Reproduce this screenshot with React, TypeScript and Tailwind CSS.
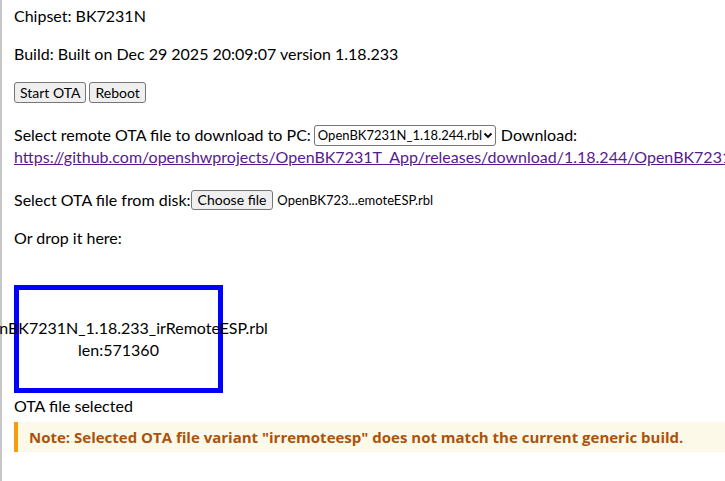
export default function App() {
  return (
    <div className="h-[481px] w-[725px] overflow-hidden bg-white">
      <div
        className="flex h-full flex-col border-l-2 border-[#c6c6c6] pl-3 text-[16px] leading-[22px] text-black"
        style={{ fontFamily: "Lato, 'Liberation Sans', sans-serif" }}
      >
        <p className="mt-[5px]">Chipset: BK7231N</p>
        <p className="mt-4">Build: Built on Dec 29 2025 20:09:07 version 1.18.233</p>

        <div className="mt-[17px] flex gap-[3px]">
          <button className="h-[21px] rounded-[3px] border border-[#767676] bg-[#efefef] px-[5px] text-[14px] leading-[19px]">
            Start OTA
          </button>
          <button className="h-[21px] rounded-[3px] border border-[#767676] bg-[#efefef] px-[5px] text-[14px] leading-[19px]">
            Reboot
          </button>
        </div>

        <div className="mt-[21px] flex items-center whitespace-nowrap">
          <span>Select remote OTA file to download to PC:</span>
          <span className="ml-[3px] flex h-[21px] w-[182px] items-center justify-between rounded-[3px] border border-[#767676] bg-white pl-[3px] pr-[2px] text-[13px]">
            OpenBK7231N_1.18.244.rbl
            <svg width="10" height="10" viewBox="0 0 10 10">
              <path d="M1.5 3.5 L5 7 L8.5 3.5" fill="none" stroke="#000" strokeWidth="1.8" />
            </svg>
          </span>
          <span className="ml-[5px]">Download:</span>
        </div>
        <a href="#" className="whitespace-nowrap text-[#551a8b] underline">
          https://github.com/openshwprojects/OpenBK7231T_App/releases/download/1.18.244/OpenBK7231N_1.18.244.rbl
        </a>

        <div className="mt-[21px] flex items-center whitespace-nowrap">
          <span>Select OTA file from disk:</span>
          <button className="h-[20px] rounded-[3px] border border-[#767676] bg-[#efefef] px-[6px] text-[14px] leading-[18px]">
            Choose file
          </button>
          <span className="ml-[4px] text-[13px]">OpenBK723...emoteESP.rbl</span>
        </div>

        <p className="mt-4">Or drop it here:</p>

        <div className="mt-[36px] flex h-[108px] w-[209px] flex-col items-center justify-center border-[5px] border-[#0000ff]">
          <span className="whitespace-nowrap">OpenBK7231N_1.18.233_irRemoteESP.rbl</span>
          <span>len:571360</span>
        </div>

        <p className="mt-[2px]">OTA file selected</p>

        <div
          className="mr-[-20px] mt-[5px] whitespace-nowrap border-l-4 border-[#f59e0b] bg-[#fdf9e9] py-1 pl-[11px] text-[15px] font-bold text-[#ac520b]"
          style={{ fontFamily: "'Open Sans', Lato, sans-serif" }}
        >
          Note: Selected OTA file variant "irremoteesp" does not match the current generic build.
        </div>
      </div>
    </div>
  );
}
